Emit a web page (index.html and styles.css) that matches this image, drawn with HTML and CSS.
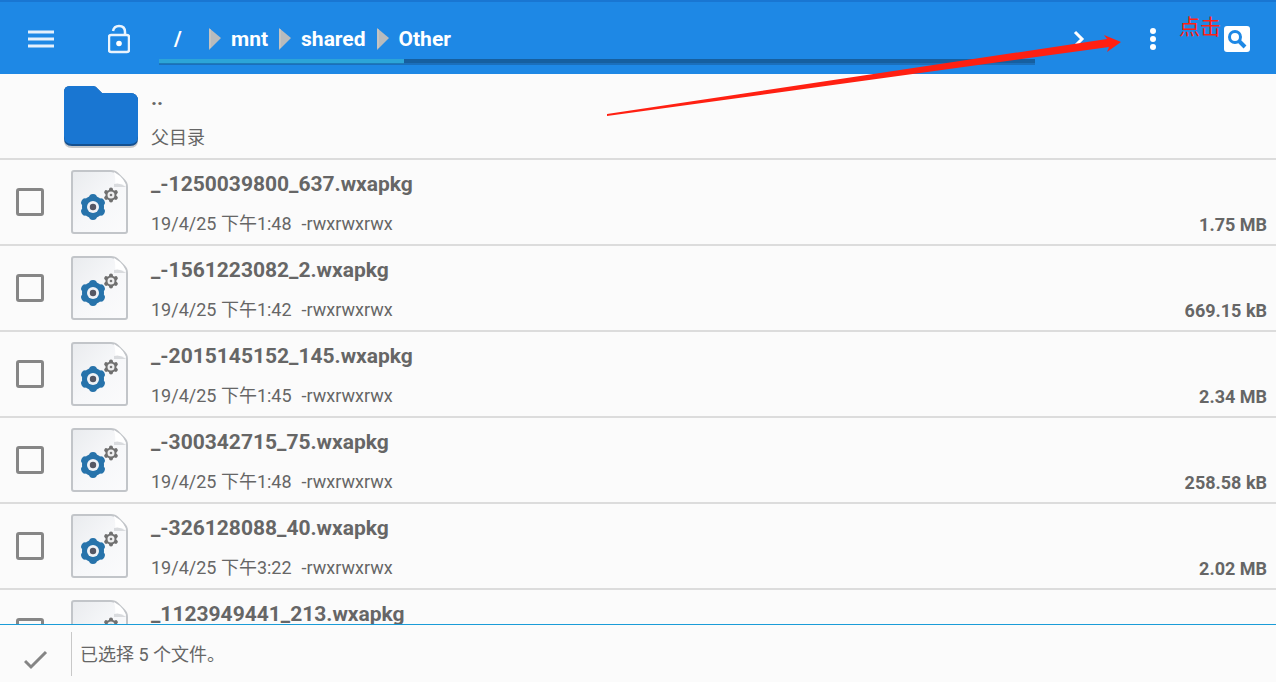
FILE: index.html
```html
<!DOCTYPE html>
<html lang="zh-CN">
<head>
    <meta charset="UTF-8">
    <meta name="viewport" content="width=device-width, initial-scale=1.0">
    <title>Other</title>
    <link rel="stylesheet" href="styles.css">
</head>
<body>

<!-- shared icons -->
<svg class="symbols" aria-hidden="true">
    <defs>
        <linearGradient id="paper" x1="0" y1="0" x2="1" y2="1">
            <stop offset="0" stop-color="#e9ebee"/>
            <stop offset="0.5" stop-color="#f6f7f9"/>
            <stop offset="1" stop-color="#fbfbfc"/>
        </linearGradient>
    </defs>
    <symbol id="file" viewBox="0 0 60 66">
        <path d="M4 2H41Q45 2 48 5L54 11Q57 14 57 18V62Q57 64 55 64H4Q2 64 2 62V4Q2 2 4 2Z" fill="url(#paper)" stroke="#c2c5c9" stroke-width="2"/>
        <path d="M44 3Q46 11 45 16Q51 13 56 17Q55 12 50 7Z" fill="#fff"/>
        <path d="M44 15Q50 13 56 18H44Z" fill="#d9dbde"/>
        <circle cx="23" cy="38" r="11" fill="#2773ab"/>
        <path d="M23 29V47M15.200 33.500L30.800 42.500M15.200 42.500L30.800 33.500" stroke="#2773ab" stroke-width="8" stroke-linecap="round"/>
        <circle cx="23" cy="38" r="6" fill="#f0f2f6"/>
        <circle cx="23" cy="38" r="3.200" fill="#555764"/>
        <path d="M41 20.500V31.500M36.200 23.200L45.800 28.800M36.200 28.800L45.800 23.200" stroke="#707070" stroke-width="4" stroke-linecap="round"/>
        <circle cx="41" cy="26" r="4.500" fill="#eeeeef" stroke="#707070" stroke-width="2"/>
        <circle cx="41" cy="26" r="1.300" fill="#777"/>
    </symbol>
    <symbol id="arrow" viewBox="0 0 12 22">
        <path d="M0 0L12 10L0 22Z" fill="#b8bbbd"/>
        <path d="M1 1V20" stroke="#d5cdc4" stroke-width="1"/>
    </symbol>
</svg>

<header class="toolbar">
    <button class="tool menu" aria-label="菜单">
        <svg width="26" height="18" viewBox="0 0 26 18"><path d="M0 2H26M0 9H26M0 16H26" stroke="#e4f0fc" stroke-width="3"/></svg>
    </button>
    <button class="tool lock" aria-label="锁定">
        <svg width="22" height="30" viewBox="0 0 22 30">
            <rect x="1" y="11" width="20" height="17" rx="2" fill="none" stroke="#eaf4fd" stroke-width="2.500"/>
            <path d="M5 7Q6 2 11 2Q17 2 17 8V11" fill="none" stroke="#eaf4fd" stroke-width="2.500"/>
            <circle cx="11" cy="19.500" r="2.800" fill="#fff"/>
        </svg>
    </button>
    <nav class="path">
        <div class="crumbs">
            <a href="#" class="root">/</a>
            <svg width="12" height="22"><use href="#arrow"/></svg>
            <a href="#">mnt</a>
            <svg width="12" height="22"><use href="#arrow"/></svg>
            <a href="#">shared</a>
            <svg width="12" height="22"><use href="#arrow"/></svg>
            <a href="#">Other</a>
        </div>
        <div class="usage"><div class="used" style="width: 28%"></div></div>
    </nav>
    <button class="tool next" aria-label="前进">
        <svg width="12" height="18" viewBox="0 0 12 18"><path d="M2 2L9 9L2 16" fill="none" stroke="#fff" stroke-width="3"/></svg>
    </button>
    <button class="tool more" aria-label="更多">
        <svg width="6" height="24" viewBox="0 0 6 24" fill="#fff"><circle cx="3" cy="4" r="3"/><circle cx="3" cy="12" r="3"/><circle cx="3" cy="20" r="3"/></svg>
    </button>
    <button class="tool search" aria-label="搜索">
        <svg width="26" height="26" viewBox="0 0 26 26">
            <rect width="26" height="26" rx="3" fill="#fff"/>
            <circle cx="11" cy="11" r="5.500" fill="none" stroke="#1e88e5" stroke-width="3"/>
            <path d="M15 15L21 21" stroke="#1e88e5" stroke-width="4"/>
        </svg>
    </button>
</header>

<ul class="files">
    <li class="row">
        <span class="tick"></span>
        <svg class="folder" width="78" height="66" viewBox="0 0 78 66">
            <path d="M8 4H31Q34 4 36 7L40 11H68Q76 11 76 19V57Q76 65 68 65H10Q2 65 2 57V10Q2 4 8 4Z" fill="#8f9499" opacity="0.5"/>
            <path d="M8 3H31Q34 3 36 6L40 10H68Q76 10 76 18V55Q76 63 68 63H10Q2 63 2 55V9Q2 3 8 3Z" fill="#14508f"/>
            <path d="M8 3H31Q34 3 36 6L40 10H68Q76 10 76 18V53Q76 61 68 61H10Q2 61 2 53V9Q2 3 8 3Z" fill="#1976d2"/>
        </svg>
        <div class="info parent">
            <div class="name">..</div>
            <div class="meta">父目录</div>
        </div>
    </li>
    <li class="row">
        <input class="tick" type="checkbox" id="f1">
        <svg class="icon" width="60" height="66"><use href="#file"/></svg>
        <div class="info">
            <label class="name" for="f1">_-1250039800_637.wxapkg</label>
            <div class="meta"><span>19/4/25 下午1:48</span><span>-rwxrwxrwx</span></div>
        </div>
        <div class="size">1.75 MB</div>
    </li>
    <li class="row">
        <input class="tick" type="checkbox" id="f2">
        <svg class="icon" width="60" height="66"><use href="#file"/></svg>
        <div class="info">
            <label class="name" for="f2">_-1561223082_2.wxapkg</label>
            <div class="meta"><span>19/4/25 下午1:42</span><span>-rwxrwxrwx</span></div>
        </div>
        <div class="size">669.15 kB</div>
    </li>
    <li class="row">
        <input class="tick" type="checkbox" id="f3">
        <svg class="icon" width="60" height="66"><use href="#file"/></svg>
        <div class="info">
            <label class="name" for="f3">_-2015145152_145.wxapkg</label>
            <div class="meta"><span>19/4/25 下午1:45</span><span>-rwxrwxrwx</span></div>
        </div>
        <div class="size">2.34 MB</div>
    </li>
    <li class="row">
        <input class="tick" type="checkbox" id="f4">
        <svg class="icon" width="60" height="66"><use href="#file"/></svg>
        <div class="info">
            <label class="name" for="f4">_-300342715_75.wxapkg</label>
            <div class="meta"><span>19/4/25 下午1:48</span><span>-rwxrwxrwx</span></div>
        </div>
        <div class="size">258.58 kB</div>
    </li>
    <li class="row">
        <input class="tick" type="checkbox" id="f5">
        <svg class="icon" width="60" height="66"><use href="#file"/></svg>
        <div class="info">
            <label class="name" for="f5">_-326128088_40.wxapkg</label>
            <div class="meta"><span>19/4/25 下午3:22</span><span>-rwxrwxrwx</span></div>
        </div>
        <div class="size">2.02 MB</div>
    </li>
    <li class="row">
        <input class="tick" type="checkbox" id="f6">
        <svg class="icon" width="60" height="66"><use href="#file"/></svg>
        <div class="info">
            <label class="name" for="f6">_1123949441_213.wxapkg</label>
        </div>
    </li>
</ul>

<footer class="status">
    <button class="done" aria-label="完成">
        <svg width="24" height="20" viewBox="0 0 24 20"><path d="M1 11L7 17L22 2" fill="none" stroke="#858585" stroke-width="3"/></svg>
    </button>
    <div class="message">已选择 5 个文件。</div>
</footer>

<!-- hint drawn over the toolbar -->
<svg class="pointer" width="516" height="84" viewBox="0 0 516 84" aria-hidden="true">
    <path d="M0 80L500 5L497 1L514 8L500 18L502 13L0 82Z" fill="#ff2012"/>
</svg>
<div class="hint">点击</div>

</body>
</html>
```
FILE: styles.css
```css
* {
    box-sizing: border-box;
}
body {
    display: flex;
    flex-direction: column;
    height: 100vh;
    margin: 0;
    overflow: hidden;
    position: relative;
    font-family: Roboto, "Noto Sans CJK SC", sans-serif;
    font-size: 18px;
    color: #666;
    background-color: #fbfbfb;
}
button {
    padding: 0;
    border: 0;
    background: none;
    cursor: pointer;
}
svg {
    display: block;
    flex: none;
}
.symbols {
    position: absolute;
    width: 0;
    height: 0;
}

/* toolbar */
.toolbar {
    display: flex;
    flex: none;
    height: 74px;
    border-top: 2px solid #1976d2;
    background-color: #1e88e5;
}
.tool {
    display: flex;
    flex: none;
    align-items: center;
    justify-content: center;
    padding-top: 2px;
}
.menu {
    width: 82px;
}
.lock {
    width: 77px;
    padding-right: 4px;
}
.path {
    display: flex;
    flex: 1;
    flex-direction: column;
    padding-top: 16px;
}
.crumbs {
    display: flex;
    align-items: center;
    height: 41px;
    gap: 10px;
    font-size: 21px;
    font-weight: bold;
}
.crumbs a {
    padding-right: 1px;
    color: #fff;
    text-decoration: none;
}
.crumbs .root {
    width: 40px;
    padding-left: 15px;
}
.usage {
    height: 6px;
    border-bottom: 2px solid #1b6fbb;
    background-color: #165f9f;
}
.used {
    height: 5px;
    background-color: #2ca5d8;
    border-bottom: 1px solid #1d7cb8;
}
.next {
    width: 88px;
}
.more {
    width: 60px;
}
.search {
    width: 93px;
    padding-left: 15px;
}

/* file list */
.files {
    flex: 1;
    min-height: 0;
    margin: 0;
    padding: 0;
    overflow: hidden;
    list-style: none;
}
.row {
    display: flex;
    align-items: center;
    height: 86px;
    border-bottom: 2px solid #dcdcdc;
}
.tick {
    appearance: none;
    flex: none;
    width: 28px;
    height: 28px;
    margin: 0 24px 0 16px;
}
input.tick {
    border: 3px solid #868686;
    border-radius: 3px;
}
input.tick:checked {
    background-color: #1e88e5;
}
.icon {
    margin: 0 21px 0 2px;
}
.folder {
    margin: 0 11px 0 -6px;
}
.info {
    flex: 1;
    height: 84px;
    padding-top: 10px;
}
.name {
    display: block;
    font-size: 21px;
    font-weight: bold;
    line-height: 28px;
}
.meta {
    display: flex;
    gap: 10px;
    margin-top: 12px;
    line-height: 28px;
}
.size {
    align-self: flex-end;
    padding: 0 9px 5px 0;
    font-weight: bold;
    line-height: 28px;
}
.parent .name {
    line-height: 28px;
}

/* bottom bar */
.status {
    display: flex;
    flex: none;
    align-items: center;
    height: 58px;
    border-top: 1px solid #1a9cd8;
}
.done {
    display: flex;
    align-items: center;
    justify-content: center;
    width: 72px;
    height: 44px;
    padding-top: 13px;
    border-right: 1px solid #c8c8c8;
}
.message {
    padding: 0 0 2px 8px;
}

/* hint */
.pointer {
    position: absolute;
    top: 34px;
    right: 153px;
}
.hint {
    position: absolute;
    top: 13px;
    right: 55px;
    font-size: 21px;
    line-height: 28px;
    color: #ff2012;
}
```
